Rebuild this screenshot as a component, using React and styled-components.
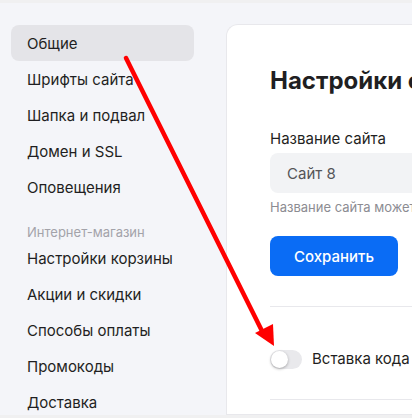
import React from "react";
import styled, { createGlobalStyle } from "styled-components";

const GlobalStyle = createGlobalStyle`
  html, body {
    margin: 0;
    padding: 0;
    background: #f0f0f1;
    font-family: Inter, "Noto Sans", Arial, sans-serif;
    color: #1f1f22;
  }
`;

const menu = ["Общие", "Шрифты сайта", "Шапка и подвал", "Домен и SSL", "Оповещения"];
const shopMenu = ["Настройки корзины", "Акции и скидки", "Способы оплаты", "Промокоды", "Доставка"];

const App = () => {
  return (
    <>
      <GlobalStyle />
      <Page>
        <Layout>
          <Sidebar>
            {menu.map((item, index) => (
              <MenuItem key={item} active={index === 0}>
                {item}
              </MenuItem>
            ))}
            <SectionLabel>Интернет-магазин</SectionLabel>
            {shopMenu.map((item) => (
              <MenuItem key={item}>{item}</MenuItem>
            ))}
          </Sidebar>
          <Card>
            <Title>Настройки сайта</Title>
            <FieldLabel>Название сайта</FieldLabel>
            <Input defaultValue="Сайт 8" />
            <Hint>Название сайта может отображаться в поисковой выдаче</Hint>
            <SaveButton>Сохранить</SaveButton>
            <Divider />
            <ToggleRow>
              <Toggle />
              <ToggleLabel>Вставка кода</ToggleLabel>
            </ToggleRow>
            <Divider />
          </Card>
        </Layout>
        <Arrow width="412" height="418" viewBox="0 0 412 418">
          <line x1="126" y1="58" x2="263" y2="333" stroke="#ff0000" strokeWidth="4.5" strokeLinecap="round" />
          <polygon points="255,333 274,346 273,324" fill="#ff0000" />
        </Arrow>
      </Page>
    </>
  );
};

export default App;

const Page = styled.div`
  position: relative;
  width: 412px;
  height: 418px;
  overflow: hidden;
  padding-top: 3px;
  padding-bottom: 3px;
  box-sizing: border-box;
`;

const Layout = styled.div`
  display: flex;
  height: 412px;
  background: #f4f5f9;
  overflow: hidden;
`;

const Sidebar = styled.div`
  width: 226px;
  flex-shrink: 0;
  box-sizing: border-box;
  padding: 22px 0 0 11px;
  display: flex;
  flex-direction: column;
`;

const MenuItem = styled.div`
  width: 183px;
  height: 36px;
  flex-shrink: 0;
  box-sizing: border-box;
  padding-left: 16px;
  display: flex;
  align-items: center;
  font-size: 15px;
  border-radius: 8px;
  background: ${(p) => (p.active ? "#e4e4e8" : "transparent")};
  white-space: nowrap;
`;

const SectionLabel = styled.div`
  margin-top: 19px;
  padding-left: 16px;
  font-size: 13px;
  line-height: 16px;
  color: #a3a3aa;
`;

const Card = styled.div`
  flex: 1;
  margin-top: 21px;
  background: #ffffff;
  border: 1px solid #e8e8ec;
  border-right: none;
  border-radius: 12px 0 0 0;
  padding: 40px 0 0 43px;
  min-width: 0;
  overflow: hidden;
`;

const Title = styled.h1`
  margin: 0;
  font-size: 24px;
  line-height: 32px;
  font-weight: 700;
  white-space: nowrap;
`;

const FieldLabel = styled.div`
  margin-top: 32px;
  font-size: 15px;
  line-height: 20px;
  white-space: nowrap;
`;

const Input = styled.input`
  display: block;
  margin-top: 4px;
  width: 300px;
  height: 40px;
  box-sizing: border-box;
  border: none;
  border-radius: 8px;
  background: #f2f3f5;
  padding: 0 17px;
  font-family: inherit;
  font-size: 15px;
  color: #555558;
  outline: none;
`;

const Hint = styled.div`
  margin-top: 6px;
  font-size: 13px;
  line-height: 16px;
  color: #8c8c92;
  white-space: nowrap;
`;

const SaveButton = styled.button`
  display: block;
  margin-top: 21px;
  width: 128px;
  height: 40px;
  border: none;
  border-radius: 8px;
  background: #0a6cf5;
  color: #ffffff;
  font-family: inherit;
  font-size: 15px;
  font-weight: 500;
`;

const Divider = styled.div`
  margin-top: 30px;
  height: 1px;
  background: #e8e8ec;
`;

const ToggleRow = styled.div`
  margin-top: 42px;
  display: flex;
  align-items: center;
  gap: 10px;
  margin-bottom: 3px;
`;

const Toggle = styled.div`
  position: relative;
  width: 32px;
  height: 19px;
  border-radius: 10px;
  background: #e9e9ec;
  flex-shrink: 0;

  &::after {
    content: "";
    position: absolute;
    left: 1px;
    top: 1px;
    width: 17px;
    height: 17px;
    border-radius: 50%;
    background: #ffffff;
    box-shadow: 0 1px 3px rgba(0, 0, 0, 0.3);
  }
`;

const ToggleLabel = styled.div`
  font-size: 15px;
  line-height: 20px;
  white-space: nowrap;
`;

const Arrow = styled.svg`
  position: absolute;
  left: 0;
  top: 0;
  pointer-events: none;
`;
